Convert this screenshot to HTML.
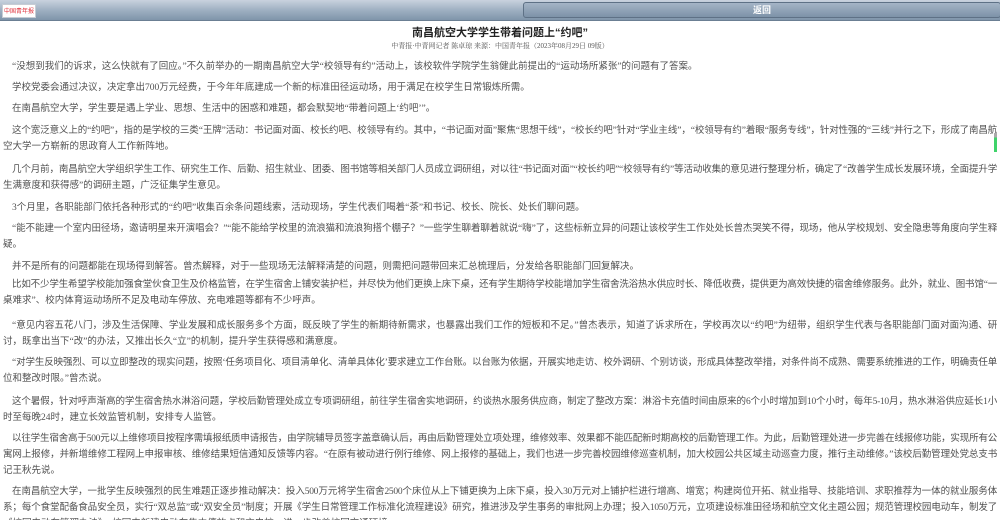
<!DOCTYPE html>
<html><head><meta charset="utf-8">
<style>
html,body{margin:0;padding:0;width:1000px;height:520px;overflow:hidden;background:#fff;}
body{position:relative;font-family:"Liberation Serif","Noto Serif CJK SC","Noto Sans CJK SC",serif;}
.bar{position:absolute;left:0;top:0;width:1000px;height:20px;background:linear-gradient(#c9d2de,#9fb0c2 50%,#7f95aa);border-bottom:1px solid #6b7f93;}
.logo{position:absolute;left:2px;top:4px;width:32px;height:12px;background:#fff;border:1px solid #c7ccd4;color:#e0303a;font-size:6px;line-height:12px;text-align:center;font-family:"Noto Sans CJK SC",sans-serif;white-space:nowrap;overflow:hidden;}
.btn{position:absolute;left:523px;top:2px;width:476px;height:14px;border:1px solid #5e7186;border-radius:3px;background:linear-gradient(#a4b4c6,#7d92a8);color:#fff;font-size:9px;font-weight:bold;text-align:center;line-height:14px;font-family:"Noto Sans CJK SC",sans-serif;}
.title{position:absolute;left:0;width:1000px;top:25px;text-align:center;font-size:11px;font-weight:bold;color:#222;line-height:16px;font-family:"Liberation Sans","Noto Sans CJK SC",sans-serif;}
.by{position:absolute;left:0;width:1000px;top:41px;text-align:center;font-size:7px;color:#555;line-height:10px;}
.l{position:absolute;white-space:nowrap;font-size:9.5px;line-height:16px;color:#505050;font-family:"Liberation Serif","Noto Sans CJK SC",sans-serif;}
.f{left:12px;}
.c{left:3px;}
.j{text-align:justify;text-align-last:justify;letter-spacing:-0.3px;overflow:hidden;}
.f.j{width:985px;}
.c.j{width:994px;}
.sb{position:absolute;left:994px;top:133px;width:3px;height:19px;background:linear-gradient(#aaa 0 25%,#3fd36a 25%);}
</style></head><body>
<div class="bar"></div>
<div class="logo">中国青年报</div>
<div class="btn">返回</div>
<div class="title">南昌航空大学学生带着问题上“约吧”</div>
<div class="by">中青报·中青网记者 陈卓琼 来源：中国青年报（2023年08月29日 09版）</div>

<div class="l f" style="top:59px">“没想到我们的诉求，这么快就有了回应。”不久前举办的一期南昌航空大学“校领导有约”活动上，该校软件学院学生翁健此前提出的“运动场所紧张”的问题有了答案。</div>
<div class="l f" style="top:80px">学校党委会通过决议，决定拿出700万元经费，于今年年底建成一个新的标准田径运动场，用于满足在校学生日常锻炼所需。</div>
<div class="l f" style="top:101px">在南昌航空大学，学生要是遇上学业、思想、生活中的困惑和难题，都会默契地“带着问题上‘约吧’”。</div>
<div class="l f j" style="top:123px">这个宽泛意义上的“约吧”，指的是学校的三类“王牌”活动：书记面对面、校长约吧、校领导有约。其中，“书记面对面”聚焦“思想干线”，“校长约吧”针对“学业主线”，“校领导有约”着眼“服务专线”，针对性强的“三线”并行之下，形成了南昌航</div>
<div class="l c" style="top:139px">空大学一方崭新的思政育人工作新阵地。</div>
<div class="l f j" style="top:162px">几个月前，南昌航空大学组织学生工作、研究生工作、后勤、招生就业、团委、图书馆等相关部门人员成立调研组，对以往“书记面对面”“校长约吧”“校领导有约”等活动收集的意见进行整理分析，确定了“改善学生成长发展环境，全面提升学</div>
<div class="l c" style="top:178px">生满意度和获得感”的调研主题，广泛征集学生意见。</div>
<div class="l f" style="top:200px">3个月里，各职能部门依托各种形式的“约吧”收集百余条问题线索，活动现场，学生代表们喝着“茶”和书记、校长、院长、处长们聊问题。</div>
<div class="l f j" style="top:221px">“能不能建一个室内田径场，邀请明星来开演唱会？”“能不能给学校里的流浪猫和流浪狗搭个棚子？”一些学生聊着聊着就说“嗨”了，这些标新立异的问题让该校学生工作处处长曾杰哭笑不得，现场，他从学校规划、安全隐患等角度向学生释</div>
<div class="l c" style="top:237px">疑。</div>
<div class="l f" style="top:259px">并不是所有的问题都能在现场得到解答。曾杰解释，对于一些现场无法解释清楚的问题，则需把问题带回来汇总梳理后，分发给各职能部门回复解决。</div>
<div class="l f j" style="top:277px">比如不少学生希望学校能加强食堂伙食卫生及价格监管，在学生宿舍上铺安装护栏，并尽快为他们更换上床下桌，还有学生期待学校能增加学生宿舍洗浴热水供应时长、降低收费，提供更为高效快捷的宿舍维修服务。此外，就业、图书馆“一</div>
<div class="l c" style="top:293px">桌难求”、校内体育运动场所不足及电动车停放、充电难题等都有不少呼声。</div>
<div class="l f j" style="top:318px">“意见内容五花八门，涉及生活保障、学业发展和成长服务多个方面，既反映了学生的新期待新需求，也暴露出我们工作的短板和不足。”曾杰表示，知道了诉求所在，学校再次以“约吧”为纽带，组织学生代表与各职能部门面对面沟通、研</div>
<div class="l c" style="top:334px">讨，既拿出当下“改”的办法，又推出长久“立”的机制，提升学生获得感和满意度。</div>
<div class="l f j" style="top:355px">“对学生反映强烈、可以立即整改的现实问题，按照‘任务项目化、项目清单化、清单具体化’要求建立工作台账。以台账为依据，开展实地走访、校外调研、个别访谈，形成具体整改举措，对条件尚不成熟、需要系统推进的工作，明确责任单</div>
<div class="l c" style="top:371px">位和整改时限。”曾杰说。</div>
<div class="l f j" style="top:394px">这个暑假，针对呼声渐高的学生宿舍热水淋浴问题，学校后勤管理处成立专项调研组，前往学生宿舍实地调研，约谈热水服务供应商，制定了整改方案：淋浴卡充值时间由原来的6个小时增加到10个小时，每年5-10月，热水淋浴供应延长1小</div>
<div class="l c" style="top:410px">时至每晚24时，建立长效监管机制，安排专人监管。</div>
<div class="l f j" style="top:431px">以往学生宿舍高于500元以上维修项目按程序需填报纸质申请报告，由学院辅导员签字盖章确认后，再由后勤管理处立项处理，维修效率、效果都不能匹配新时期高校的后勤管理工作。为此，后勤管理处进一步完善在线报修功能，实现所有公</div>
<div class="l c j" style="top:447px">寓网上报修，并新增维修工程网上申报审核、维修结果短信通知反馈等内容。“在原有被动进行例行维修、网上报修的基础上，我们也进一步完善校园维修巡查机制，加大校园公共区域主动巡查力度，推行主动维修。”该校后勤管理处党总支书</div>
<div class="l c" style="top:463px">记王秋先说。</div>
<div class="l f j" style="top:484px">在南昌航空大学，一批学生反映强烈的民生难题正逐步推动解决：投入500万元将学生宿舍2500个床位从上下铺更换为上床下桌，投入30万元对上铺护栏进行增高、增宽；构建岗位开拓、就业指导、技能培训、求职推荐为一体的就业服务体</div>
<div class="l c j" style="top:500px">系；每个食堂配备食品安全员，实行“双总监”或“双安全员”制度；开展《学生日常管理工作标准化流程建设》研究，推进涉及学生事务的审批网上办理；投入1050万元，立项建设标准田径场和航空文化主题公园；规范管理校园电动车，制发了</div>
<div class="l c" style="top:516px">《校园电动车管理办法》，校园内新建电动车集中停放点和充电桩，进一步改善校园交通环境。</div>
<div class="sb"></div>
</body></html>
